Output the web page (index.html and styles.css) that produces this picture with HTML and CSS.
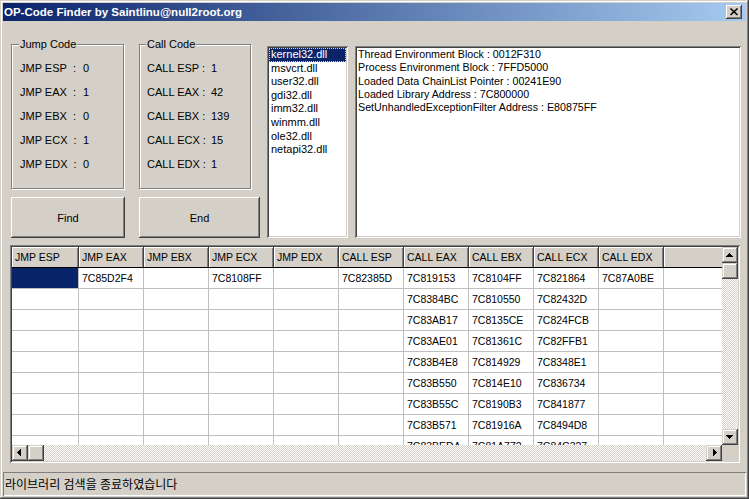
FILE: index.html
```html
<!DOCTYPE html>
<html lang="ko">
<head>
<meta charset="utf-8">
<title>OP-Code Finder</title>
<link rel="stylesheet" href="styles.css">
</head>
<body>
<div class="window">
  <div class="titlebar">
    <span class="title">OP-Code Finder by Saintlinu@null2root.org</span>
    <span class="close"><svg width="16" height="14" viewBox="0 0 16 14"><path d="M4.5 3.5l7 6.5M11.5 3.5l-7 6.5" stroke="#000" stroke-width="1.7" fill="none"/></svg></span>
  </div>
  <div class="client">
    <div class="top">
      <div class="left">
        <div class="group jump">
          <div class="legend">Jump Code</div>
          <div class="rows">
            <div class="row"><span class="lbl">JMP ESP&nbsp; :</span><span>0</span></div>
            <div class="row"><span class="lbl">JMP EAX&nbsp; :</span><span>1</span></div>
            <div class="row"><span class="lbl">JMP EBX&nbsp; :</span><span>0</span></div>
            <div class="row"><span class="lbl">JMP ECX&nbsp; :</span><span>1</span></div>
            <div class="row"><span class="lbl">JMP EDX&nbsp; :</span><span>0</span></div>
          </div>
        </div>
        <div class="group call">
          <div class="legend">Call Code</div>
          <div class="rows">
            <div class="row"><span class="lbl">CALL ESP :</span><span>1</span></div>
            <div class="row"><span class="lbl">CALL EAX :</span><span>42</span></div>
            <div class="row"><span class="lbl">CALL EBX :</span><span>139</span></div>
            <div class="row"><span class="lbl">CALL ECX :</span><span>15</span></div>
            <div class="row"><span class="lbl">CALL EDX :</span><span>1</span></div>
          </div>
        </div>
        <div class="btn find">Find</div>
        <div class="btn end">End</div>
      </div>
      <ul class="listbox">
        <li class="selected">kernel32.dll</li>
        <li>msvcrt.dll</li>
        <li>user32.dll</li>
        <li>gdi32.dll</li>
        <li>imm32.dll</li>
        <li>winmm.dll</li>
        <li>ole32.dll</li>
        <li>netapi32.dll</li>
      </ul>
      <div class="textbox">
        <div>Thread Environment Block : 0012F310</div>
        <div>Process Environment Block : 7FFD5000</div>
        <div>Loaded Data ChainList Pointer : 00241E90</div>
        <div>Loaded Library Address : 7C800000</div>
        <div>SetUnhandledExceptionFilter Address : E80875FF</div>
      </div>
    </div>
    <div class="grid">
      <div class="cells">
        <div class="c h">JMP ESP</div><div class="c h">JMP EAX</div><div class="c h">JMP EBX</div><div class="c h">JMP ECX</div><div class="c h">JMP EDX</div><div class="c h">CALL ESP</div><div class="c h">CALL EAX</div><div class="c h">CALL EBX</div><div class="c h">CALL ECX</div><div class="c h">CALL EDX</div><div class="c h fill"></div>

        <div class="c sel"></div><div class="c">7C85D2F4</div><div class="c"></div><div class="c">7C8108FF</div><div class="c"></div><div class="c">7C82385D</div><div class="c">7C819153</div><div class="c">7C8104FF</div><div class="c">7C821864</div><div class="c">7C87A0BE</div><div class="c fill"></div>

        <div class="c"></div><div class="c"></div><div class="c"></div><div class="c"></div><div class="c"></div><div class="c"></div><div class="c">7C8384BC</div><div class="c">7C810550</div><div class="c">7C82432D</div><div class="c"></div><div class="c fill"></div>

        <div class="c"></div><div class="c"></div><div class="c"></div><div class="c"></div><div class="c"></div><div class="c"></div><div class="c">7C83AB17</div><div class="c">7C8135CE</div><div class="c">7C824FCB</div><div class="c"></div><div class="c fill"></div>

        <div class="c"></div><div class="c"></div><div class="c"></div><div class="c"></div><div class="c"></div><div class="c"></div><div class="c">7C83AE01</div><div class="c">7C81361C</div><div class="c">7C82FFB1</div><div class="c"></div><div class="c fill"></div>

        <div class="c"></div><div class="c"></div><div class="c"></div><div class="c"></div><div class="c"></div><div class="c"></div><div class="c">7C83B4E8</div><div class="c">7C814929</div><div class="c">7C8348E1</div><div class="c"></div><div class="c fill"></div>

        <div class="c"></div><div class="c"></div><div class="c"></div><div class="c"></div><div class="c"></div><div class="c"></div><div class="c">7C83B550</div><div class="c">7C814E10</div><div class="c">7C836734</div><div class="c"></div><div class="c fill"></div>

        <div class="c"></div><div class="c"></div><div class="c"></div><div class="c"></div><div class="c"></div><div class="c"></div><div class="c">7C83B55C</div><div class="c">7C8190B3</div><div class="c">7C841877</div><div class="c"></div><div class="c fill"></div>

        <div class="c"></div><div class="c"></div><div class="c"></div><div class="c"></div><div class="c"></div><div class="c"></div><div class="c">7C83B571</div><div class="c">7C81916A</div><div class="c">7C8494D8</div><div class="c"></div><div class="c fill"></div>

        <div class="c"></div><div class="c"></div><div class="c"></div><div class="c"></div><div class="c"></div><div class="c"></div><div class="c">7C83BEDA</div><div class="c">7C81A772</div><div class="c">7C84C327</div><div class="c"></div><div class="c fill"></div>
      </div>
      <div class="vscroll">
        <div class="sbtn"><svg width="16" height="16" viewBox="0 0 16 16"><path d="M7 6h1v1h-1zM6 7h3v1h-3zM5 8h5v1h-5zM4 9h7v1h-7z" fill="#000"/></svg></div>
        <div class="sbtn"></div>
        <div class="track"></div>
        <div class="sbtn"><svg width="16" height="16" viewBox="0 0 16 16"><path d="M4 6h7v1h-7zM5 7h5v1h-5zM6 8h3v1h-3zM7 9h1v1h-1z" fill="#000"/></svg></div>
      </div>
      <div class="hscroll">
        <div class="sbtn"><svg width="16" height="16" viewBox="0 0 16 16"><path d="M5 7h1v1h-1zM6 6h1v3h-1zM7 5h1v5h-1zM8 4h1v7h-1z" fill="#000"/></svg></div>
        <div class="sbtn"></div>
        <div class="track"></div>
        <div class="sbtn"><svg width="16" height="16" viewBox="0 0 16 16"><path d="M10 7h1v1h-1zM9 6h1v3h-1zM8 5h1v5h-1zM7 4h1v7h-1z" fill="#000"/></svg></div>
      </div>
      <div class="corner"></div>
    </div>
  </div>
  <div class="status">라이브러리 검색을 종료하였습니다</div>
</div>
</body>
</html>
```
FILE: styles.css
```css
html, body {
  margin: 0;
  padding: 0;
  background: #d4d0c8;
}

body {
  font-family: "Liberation Sans", Arial, sans-serif;
  font-size: 11px;
  color: #000;
}

.window {
  width: 749px;
  height: 499px;
  box-sizing: border-box;
  padding: 3px 3px 3px 3px;
  display: flex;
  flex-direction: column;
  background: #d4d0c8;
  box-shadow: inset -1px -1px #404040, inset 1px 1px #d4d0c8, inset -2px -2px #808080, inset 2px 2px #fff;
}

.titlebar {
  height: 18px;
  flex: none;
  display: flex;
  align-items: center;
  justify-content: space-between;
  padding: 0 4px 0 1px;
  background: linear-gradient(to right, #0a246a, #a6caf0);
}

.title {
  color: #fff;
  font-weight: bold;
  font-size: 11.5px;
  line-height: 18px;
  white-space: nowrap;
}

.close {
  width: 16px;
  height: 14px;
  display: block;
  background: #d4d0c8;
  box-shadow: inset -1px -1px #404040, inset 1px 1px #fff, inset -2px -2px #808080;
}

.close svg {
  display: block;
}

.client {
  padding: 23px 6px 0 7px;
  display: flex;
  flex-direction: column;
}

.top {
  display: flex;
  height: 194px;
  margin: 0 -1px 0 1px;
}

.left {
  display: grid;
  grid-template-columns: 114px 121px;
  grid-template-rows: 145px 41px;
  column-gap: 14px;
  row-gap: 8px;
  flex: none;
}

.group {
  box-sizing: border-box;
  height: 145px;
  border: 1px solid #808080;
  box-shadow: 1px 1px 0 #fff, inset 1px 1px 0 #fff;
}

.group.jump {
  width: 113px;
  padding-left: 8px;
}

.group.call {
  width: 112px;
  padding-left: 7px;
}

.legend {
  display: table;
  margin: -7px 0 0 -1px;
  padding: 0 1px;
  line-height: 13px;
  background: #d4d0c8;
}

.rows {
  margin-top: 5px;
}

.row {
  display: flex;
  line-height: 24px;
  height: 24px;
  white-space: nowrap;
}

.jump .lbl {
  width: 63px;
}

.call .lbl {
  width: 64px;
}

.btn {
  display: flex;
  align-items: center;
  justify-content: center;
  background: #d4d0c8;
  box-shadow: inset -1px -1px #404040, inset 1px 1px #fff, inset -2px -2px #808080;
}

.listbox {
  list-style: none;
  margin: 2px 0 0 7px;
  padding: 2px;
  width: 81px;
  height: 192px;
  box-sizing: border-box;
  flex: none;
  background: #fff;
  box-shadow: inset 1px 1px #808080, inset -1px -1px #fff, inset 2px 2px #404040, inset -2px -2px #d4d0c8;
}

.listbox li {
  height: 13.6px;
  line-height: 13px;
  padding-left: 2px;
  white-space: nowrap;
}

.listbox li.selected {
  background: #0a246a;
  color: #fff;
  outline: 1px dotted #e0d8a0;
  outline-offset: -1px;
}

.textbox {
  margin: 2px 0 0 7px;
  flex: 1;
  height: 192px;
  box-sizing: border-box;
  padding: 2px 3px;
  background: #fff;
  font-size: 10.7px;
  line-height: 13.33px;
  white-space: nowrap;
  box-shadow: inset 1px 1px #808080, inset -1px -1px #fff, inset 2px 2px #404040, inset -2px -2px #d4d0c8;
}

.grid {
  margin-top: 7px;
  height: 218px;
  box-sizing: border-box;
  padding: 2px;
  display: grid;
  grid-template-columns: 1fr 16px;
  grid-template-rows: 1fr 16px;
  background: #d4d0c8;
  box-shadow: inset 1px 1px #808080, inset -1px -1px #fff, inset 2px 2px #404040, inset -2px -2px #d4d0c8;
}

.cells {
  overflow: hidden;
  background: #fff;
  display: grid;
  grid-template-columns: 67px repeat(9, 65px) 1fr;
  grid-template-rows: 21px;
  grid-auto-rows: 21px;
  align-content: start;
  min-height: 0;
  font-size: 10.5px;
}

.c {
  box-sizing: border-box;
  border-right: 1px solid #c0c0c0;
  border-bottom: 1px solid #c0c0c0;
  padding-left: 3px;
  line-height: 20px;
  white-space: nowrap;
  overflow: hidden;
}

.c.fill {
  border-right: none;
}

.c.h {
  background: #d4d0c8;
  border-right: 1px solid #404040;
  border-bottom: 1px solid #000;
  box-shadow: inset 1px 1px #fff, inset -1px 0 #808080;
}

.c.h.fill {
  border-right: none;
  box-shadow: inset 1px 1px #fff;
}

.c.sel {
  background: #0a246a;
}

.vscroll,
.hscroll {
  display: flex;
  background-color: #d4d0c8;
  background-image: conic-gradient(#fff 25%, transparent 0 50%, #fff 0 75%, transparent 0);
  background-size: 2px 2px;
}

.vscroll {
  flex-direction: column;
}

.track {
  flex: 1;
}

.sbtn {
  width: 16px;
  height: 16px;
  flex: none;
  background: #d4d0c8;
  box-shadow: inset -1px -1px #404040, inset 1px 1px #d4d0c8, inset -2px -2px #808080, inset 2px 2px #fff;
}

.sbtn svg {
  display: block;
}

.corner {
  background: #d4d0c8;
}

.status {
  margin-top: auto;
  height: 24px;
  box-sizing: border-box;
  padding-left: 2px;
  font-family: "Noto Sans CJK KR", "Liberation Sans", sans-serif;
  font-size: 12px;
  line-height: 24px;
  white-space: nowrap;
  box-shadow: inset 1px 1px #808080, inset -1px -1px #fff;
}
```
